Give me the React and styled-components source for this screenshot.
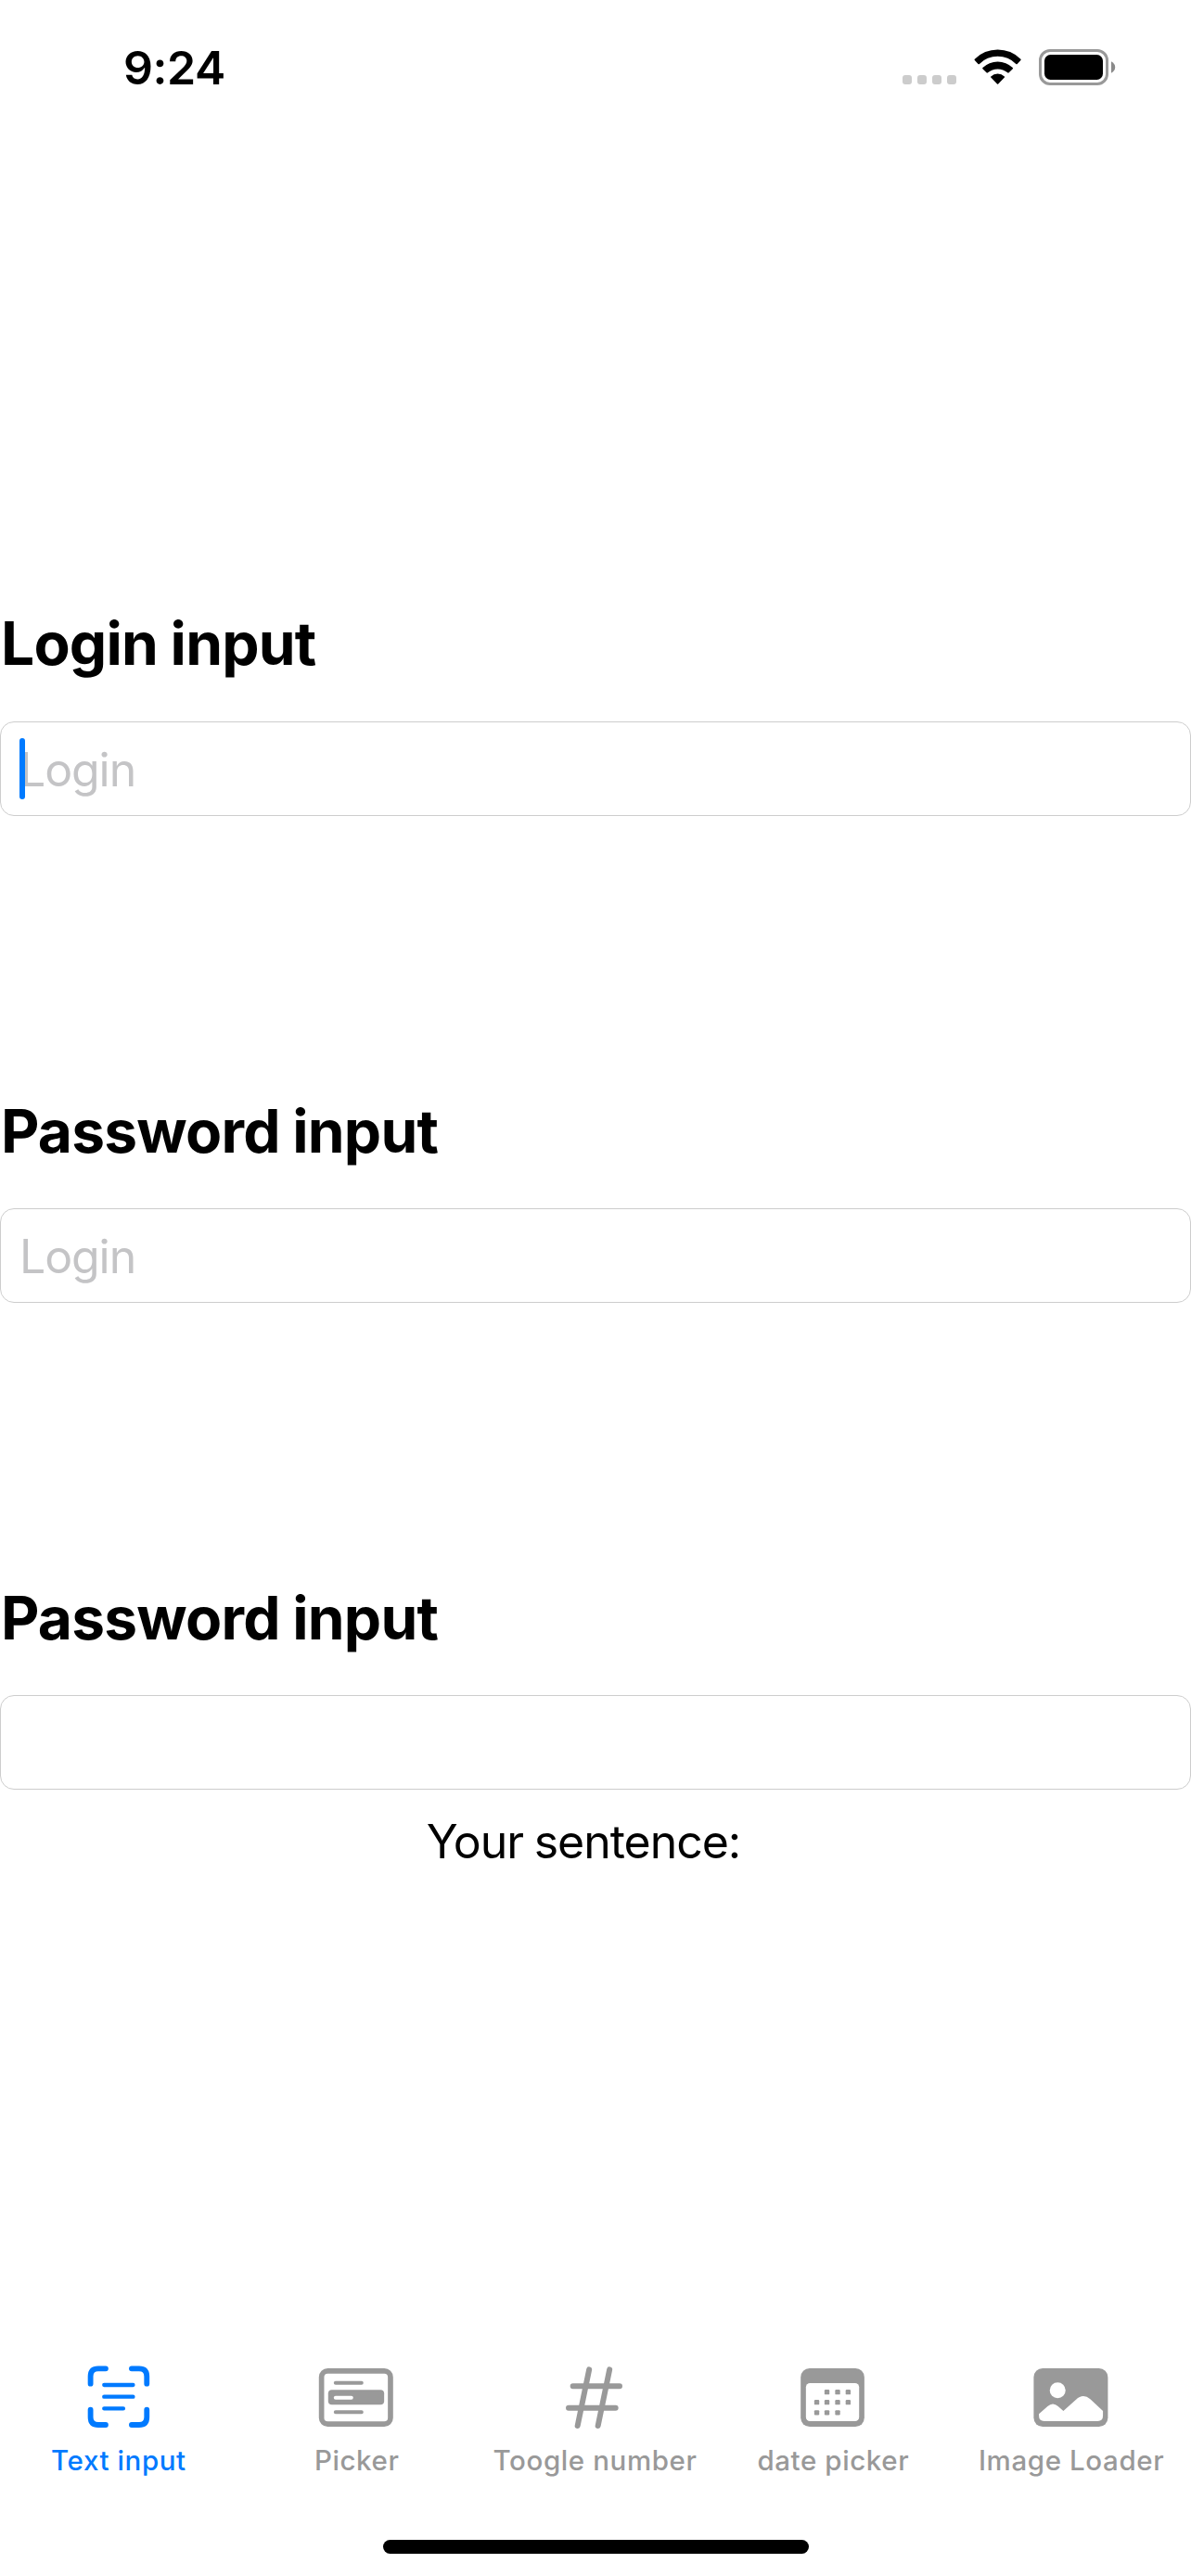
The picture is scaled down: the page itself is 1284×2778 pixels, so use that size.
import React from "react";
import styled, { createGlobalStyle } from "styled-components";

const ACCENT = "#007aff";
const INACTIVE = "#999999";

const GlobalStyle = createGlobalStyle`
  * { box-sizing: border-box; }
  body {
    margin: 0;
    background: #fff;
    color: #000;
    font-family: Inter, "Liberation Sans", sans-serif;
  }
`;

const Screen = styled.div`
  display: flex;
  flex-direction: column;
  width: 1284px;
  height: 2778px;
  overflow: hidden;
  background: #fff;
`;

const StatusBar = styled.header`
  display: flex;
  flex: none;
  align-items: flex-start;
  justify-content: space-between;
  height: 141px;
  padding: 42px 80px 0 133px;
`;

const Clock = styled.time`
  margin-top: 1px;
  font-size: 50px;
  font-weight: 600;
  line-height: 61px;
  letter-spacing: -0.43px;
`;

const StatusIcons = styled.svg`
  display: block;
  width: 234px;
  height: 60px;
`;

const Form = styled.main`
  display: flex;
  flex: 1;
  flex-direction: column;
  padding-top: 514px;
`;

const Field = styled.section`
  display: flex;
  flex-direction: column;
  gap: ${(p) => (p.$first ? 45 : 44)}px;
  margin-bottom: ${(p) => (p.$last ? 26 : 301)}px;
`;

const Title = styled.h2`
  margin: 0;
  padding-left: 1px;
  font-size: 64px;
  font-weight: 700;
  line-height: 78px;
  letter-spacing: -0.8px;
  word-spacing: -0.8px;
`;

const InputShell = styled.div`
  position: relative;
  display: flex;
  height: 102px;
`;

const Input = styled.input`
  flex: 1;
  min-width: 0;
  padding: 2px 20px 0;
  border: 1px solid #cdcdcd;
  border-radius: 15px;
  outline: none;
  background: #fff;
  color: #000;
  font-family: inherit;
  font-size: 50px;
  letter-spacing: -1.1px;

  &::placeholder {
    color: #c4c4c6;
    opacity: 1;
  }
`;

const Caret = styled.span`
  position: absolute;
  top: 18px;
  left: 21px;
  width: 6px;
  height: 66px;
  border-radius: 3px;
  background: ${ACCENT};
`;

const Sentence = styled.p`
  margin: 0;
  padding-right: 26px;
  font-size: 50px;
  line-height: 61px;
  letter-spacing: -1.02px;
  word-spacing: -1.5px;
  text-align: center;
`;

const TabBar = styled.nav`
  display: grid;
  flex: none;
  grid-template-columns: repeat(5, 1fr);
  height: 194px;
`;

const Tab = styled.a`
  display: flex;
  flex-direction: column;
  align-items: center;
  gap: 10px;
  color: ${(p) => (p.$active ? ACCENT : INACTIVE)};
`;

const TabIcon = styled.svg`
  display: block;
  width: 80px;
  height: 80px;
  overflow: visible;
`;

const TabLabel = styled.span`
  padding-right: 1px;
  font-size: 29.5px;
  font-weight: 500;
  line-height: 36px;
  letter-spacing: 0.6px;
  white-space: nowrap;
`;

const HomeArea = styled.footer`
  display: flex;
  flex: none;
  justify-content: center;
  height: 39px;
`;

const HomeIndicator = styled.div`
  width: 459px;
  height: 15px;
  border-radius: 8px;
  background: #000;
`;

function TextScanIcon() {
  return (
    <TabIcon viewBox="145.2 45 240 240" fill="none" stroke="currentColor" strokeLinecap="round">
      <path
        strokeWidth="17.5"
        d="M174 122V98Q174 73 199 73H223M307 73H331Q356 73 356 98V122M356 206V230Q356 255 331 255H307M223 255H199Q174 255 174 230V206"
      />
      <path strokeWidth="13" d="M218 126H311.500M218 164H311.500M218 202H280" />
    </TabIcon>
  );
}

function PickerIcon() {
  return (
    <TabIcon viewBox="135.6 45 240 240" fill="none" stroke="currentColor">
      <rect x="140.500" y="80.500" width="223" height="172" rx="20" strokeWidth="17" />
      <rect x="162" y="142" width="181" height="48" rx="12" fill="currentColor" stroke="none" />
      <path strokeWidth="12" strokeLinecap="round" d="M186 119H270M186 214H270" />
      <path stroke="#fff" strokeWidth="12" strokeLinecap="round" d="M186 167H237" />
    </TabIcon>
  );
}

function NumberIcon() {
  return (
    <TabIcon viewBox="246 45 240 240" fill="none" stroke="currentColor" strokeWidth="18" strokeLinecap="round">
      <path d="M345.500 76L308 258M411.500 76L374 258M293 129.500H444M279 200H431" />
    </TabIcon>
  );
}

function CalendarIcon() {
  const dots = [
    [274, 149], [308.5, 149], [342.5, 149],
    [241, 182], [274, 182], [308.5, 182], [342.5, 182],
    [241, 215.5], [274, 215.5], [308.5, 215.5],
  ];
  return (
    <TabIcon viewBox="176.4 45 240 240" fill="currentColor">
      <rect x="189" y="72" width="206" height="189" rx="29" />
      <rect x="206" y="120" width="172" height="123" rx="13" fill="#fff" />
      {dots.map(([x, y]) => (
        <rect key={`${x}-${y}`} x={x - 8} y={y - 8} width="16" height="16" rx="3.5" />
      ))}
    </TabIcon>
  );
}

function PhotoIcon() {
  return (
    <TabIcon viewBox="226.8 45 240 240" fill="currentColor">
      <rect x="222" y="72" width="240" height="189" rx="29" />
      <circle cx="299.500" cy="143" r="25.500" fill="#fff" />
      <path
        fill="#fff"
        d="M239 220L267 195Q284 180 301 195L318 210L359 173Q382 151 405 172L446 210V226Q446 243 429 243H256Q239 243 239 226Z"
      />
    </TabIcon>
  );
}

const fields = [
  { title: "Login input", placeholder: "Login", focused: true },
  { title: "Password input", placeholder: "Login" },
  { title: "Password input", placeholder: "" },
];

const tabs = [
  { label: "Text input", Icon: TextScanIcon },
  { label: "Picker", Icon: PickerIcon },
  { label: "Toogle number", Icon: NumberIcon },
  { label: "date picker", Icon: CalendarIcon },
  { label: "Image Loader", Icon: PhotoIcon },
];

export default function App() {
  return (
    <>
      <GlobalStyle />
      <Screen>
        <StatusBar>
          <Clock>9:24</Clock>
          <StatusIcons viewBox="970 42 234 60">
            {[973, 989, 1005, 1021].map((x) => (
              <rect key={x} x={x} y="81" width="10" height="10" rx="3" fill="#ccc" />
            ))}
            <path d="M1050.800 63.800A34.800 34.800 0 0 1 1100.400 63.800Q1100.900 64.500 1100.400 65.100L1096.700 68.900Q1096 69.500 1095.300 68.900A27.800 27.800 0 0 0 1055.900 68.900Q1055.200 69.500 1054.500 68.900L1050.800 65.100Q1050.300 64.500 1050.800 63.800Z" />
            <path d="M1059.400 73A23.400 23.400 0 0 1 1091.800 73Q1092.300 73.600 1091.800 74.200L1087.700 78.300Q1087 79 1086.200 78.300A16.500 16.500 0 0 0 1065 78.300Q1064.200 79 1063.500 78.300L1059.400 74.200Q1058.900 73.600 1059.400 73Z" />
            <path d="M1068.300 82.400A10.500 10.500 0 0 1 1082.900 82.400Q1083.500 83 1082.900 83.600L1076.200 90.500Q1075.600 91.100 1075 90.500L1068.300 83.600Q1067.700 83 1068.300 82.400Z" />
            <rect x="1121.500" y="54.500" width="72" height="36" rx="10.500" fill="none" stroke="#999" strokeWidth="3" />
            <rect x="1126" y="59" width="63" height="27" rx="6.500" />
            <path d="M1198 66.300Q1202.200 68.500 1202.200 72.500Q1202.200 76.500 1198 78.700Z" fill="#8a8a8a" />
          </StatusIcons>
        </StatusBar>

        <Form>
          {fields.map((f, i) => (
            <Field key={i} $first={i === 0} $last={i === fields.length - 1}>
              <Title>{f.title}</Title>
              <InputShell>
                <Input placeholder={f.placeholder} aria-label={f.title} />
                {f.focused && <Caret />}
              </InputShell>
            </Field>
          ))}
          <Sentence>Your sentence:</Sentence>
        </Form>

        <TabBar>
          {tabs.map(({ label, Icon }, i) => (
            <Tab key={label} $active={i === 0}>
              <Icon />
              <TabLabel>{label}</TabLabel>
            </Tab>
          ))}
        </TabBar>
        <HomeArea>
          <HomeIndicator />
        </HomeArea>
      </Screen>
    </>
  );
}
